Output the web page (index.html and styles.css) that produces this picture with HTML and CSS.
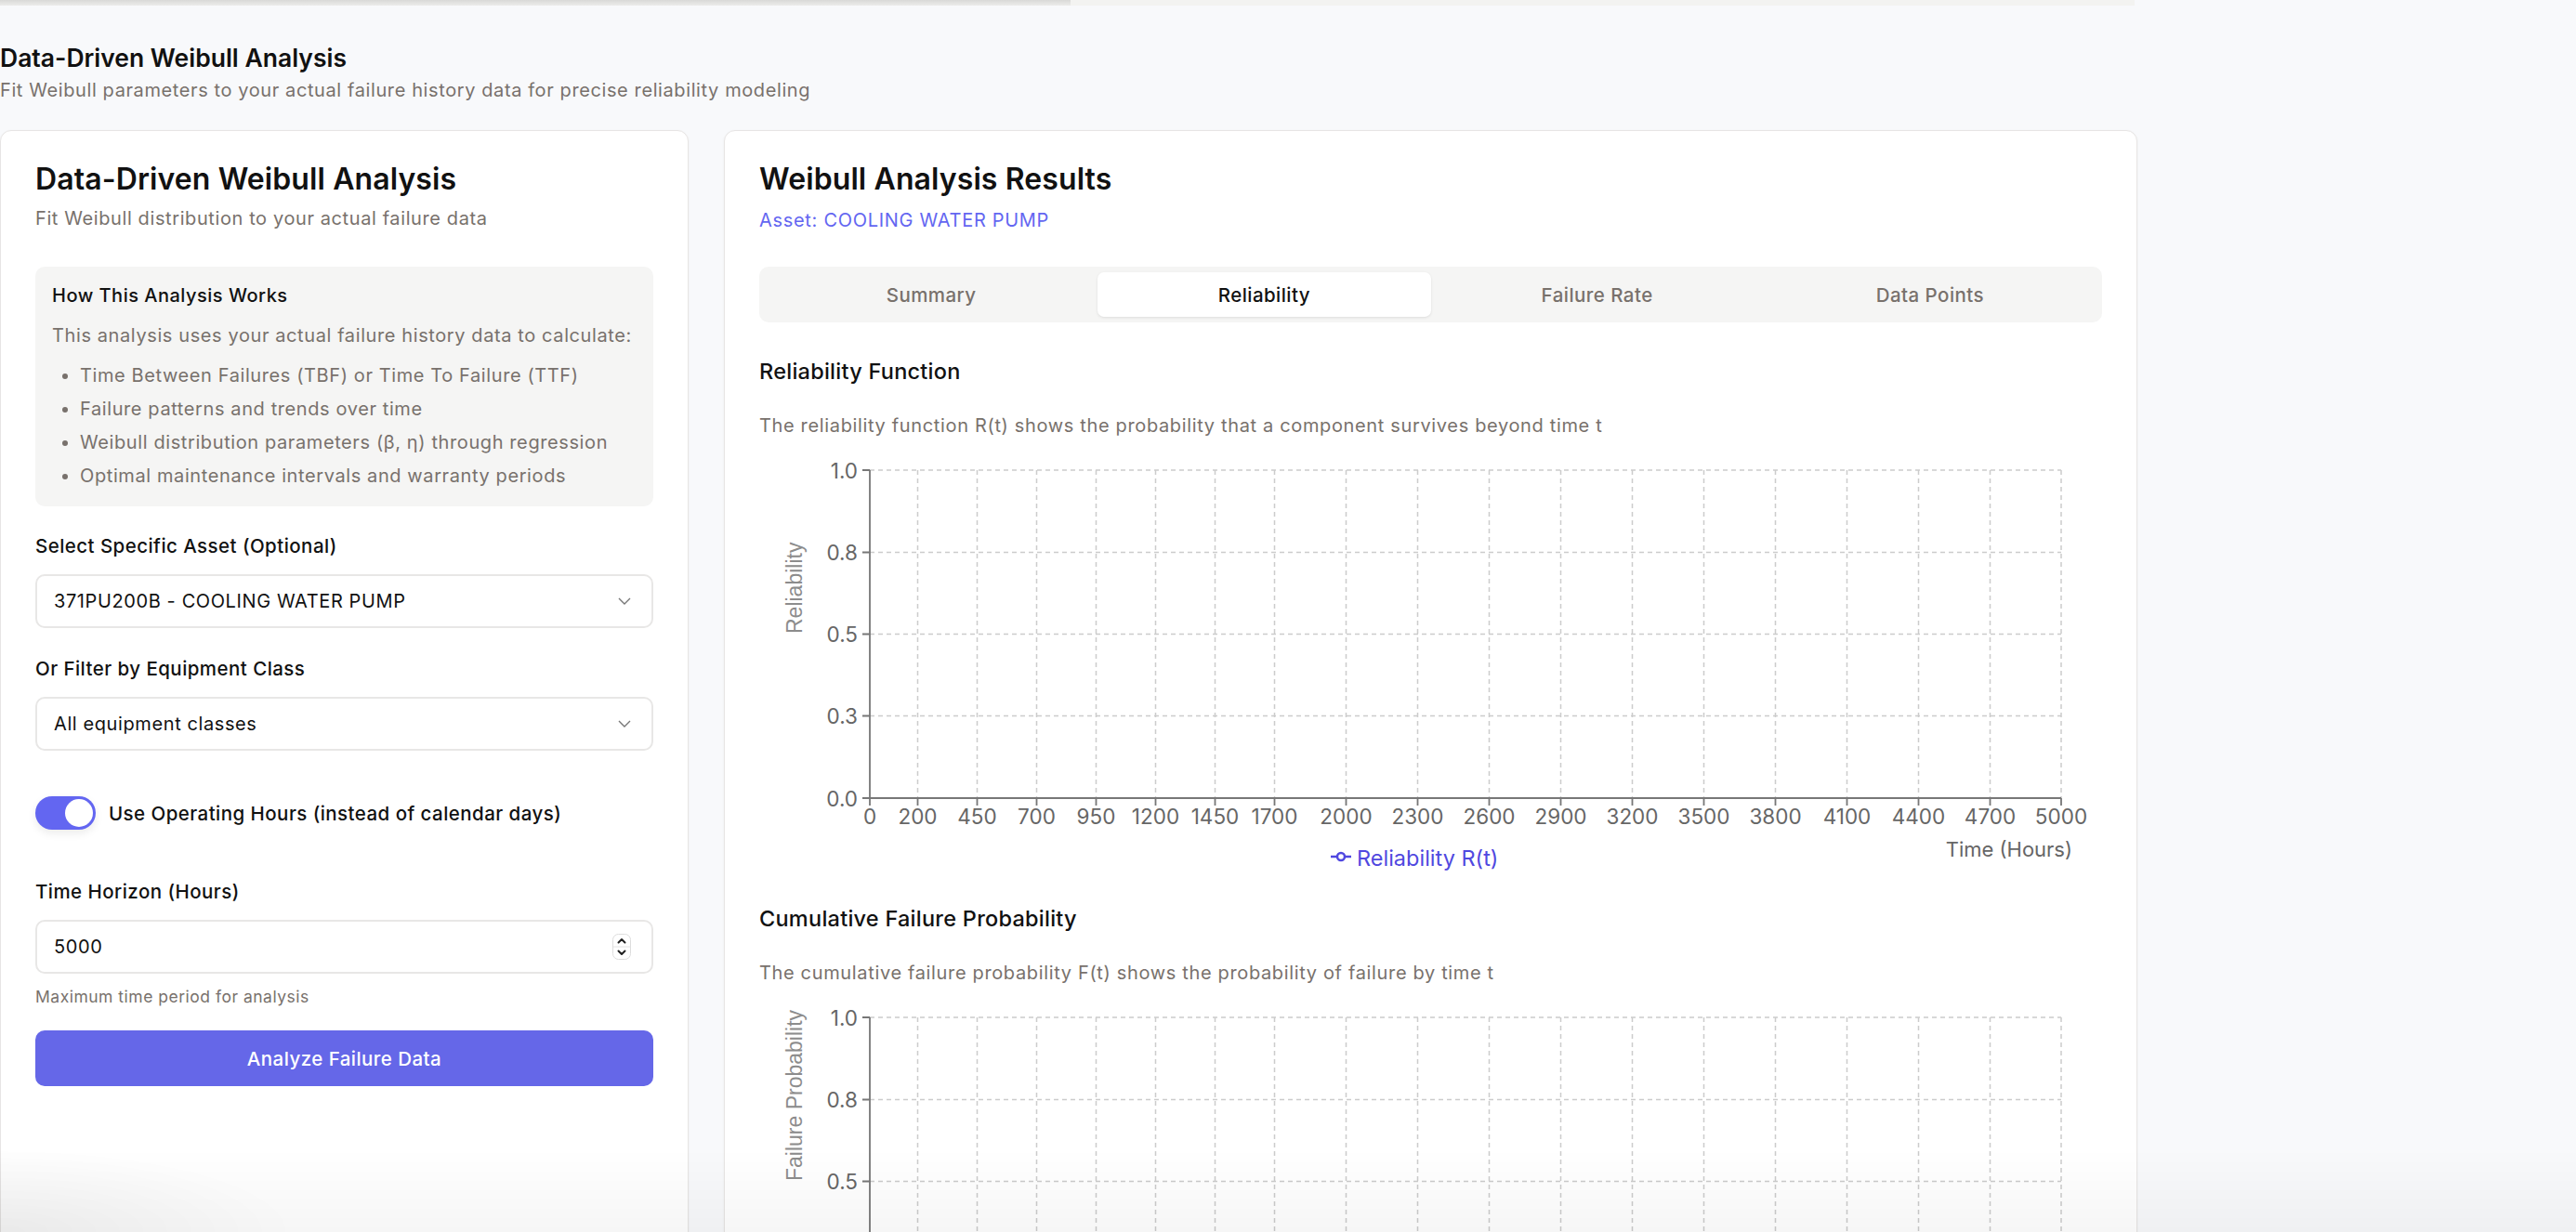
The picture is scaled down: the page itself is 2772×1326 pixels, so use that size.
FILE: index.html
```html
<!DOCTYPE html>
<html lang="en">
<head>
<meta charset="utf-8">
<title>Data-Driven Weibull Analysis</title>
<link rel="stylesheet" href="styles.css">
</head>
<body>
<div class="topstrip"><div class="strip-a"></div><div class="strip-b"></div></div>
<main class="page">
  <header class="page-head">
    <h1 class="page-title">Data-Driven Weibull Analysis</h1>
    <p class="page-sub">Fit Weibull parameters to your actual failure history data for precise reliability modeling</p>
  </header>

  <div class="layout">
    <section class="card">
      <h2 class="card-title">Data-Driven Weibull Analysis</h2>
      <p class="card-desc">Fit Weibull distribution to your actual failure data</p>

      <div class="info">
        <div class="info-title">How This Analysis Works</div>
        <p class="info-text">This analysis uses your actual failure history data to calculate:</p>
        <ul class="info-list">
          <li>Time Between Failures (TBF) or Time To Failure (TTF)</li>
          <li>Failure patterns and trends over time</li>
          <li>Weibull distribution parameters (β, η) through regression</li>
          <li>Optimal maintenance intervals and warranty periods</li>
        </ul>
      </div>

      <div class="field field-first">
        <div class="label">Select Specific Asset (Optional)</div>
        <div class="control">
          <span class="control-text">371PU200B - COOLING WATER PUMP</span>
          <svg class="chev" width="14" height="8" viewBox="0 0 14 8"><polyline points="1,1 7,7 13,1"/></svg>
        </div>
      </div>

      <div class="field field-second">
        <div class="label">Or Filter by Equipment Class</div>
        <div class="control">
          <span class="control-text">All equipment classes</span>
          <svg class="chev" width="14" height="8" viewBox="0 0 14 8"><polyline points="1,1 7,7 13,1"/></svg>
        </div>
      </div>

      <div class="toggle-row">
        <span class="toggle"><span class="knob"></span></span>
        <span class="toggle-label">Use Operating Hours (instead of calendar days)</span>
      </div>

      <div class="field field-third">
        <div class="label">Time Horizon (Hours)</div>
        <div class="control">
          <span class="control-text">5000</span>
          <svg class="spinner" width="20" height="28" viewBox="0 0 20 28">
            <rect class="spin-box" x="0.5" y="0.5" width="19" height="27" rx="6"/>
            <line class="spin-sep" x1="1" y1="14" x2="19" y2="14"/>
            <polyline class="spin-arrow" points="6.5,9.5 10,6 13.5,9.5"/>
            <polyline class="spin-arrow" points="6.5,18.5 10,22 13.5,18.5"/>
          </svg>
        </div>
        <div class="help">Maximum time period for analysis</div>
      </div>

      <div class="btn">Analyze Failure Data</div>
    </section>

    <section class="card">
      <h2 class="card-title">Weibull Analysis Results</h2>
      <p class="asset">Asset: COOLING WATER PUMP</p>

      <div class="tabs">
        <div class="tab">Summary</div>
        <div class="tab active">Reliability</div>
        <div class="tab">Failure Rate</div>
        <div class="tab">Data Points</div>
      </div>

      <div class="chart-block chart-first">
        <h3 class="chart-title">Reliability Function</h3>
        <p class="chart-desc">The reliability function R(t) shows the probability that a component survives beyond time t</p>
        <svg class="chart" width="1445" height="470" viewBox="0 0 1445 470">
          <path class="grid" d="M119 20H1401M119 108.5H1401M119 196.5H1401M119 284.5H1401M170.5 20V373M234.5 20V373M298.5 20V373M362.5 20V373M426.5 20V373M490.5 20V373M554.5 20V373M631.5 20V373M708.5 20V373M785.5 20V373M862.5 20V373M939.5 20V373M1016.5 20V373M1093.5 20V373M1170.5 20V373M1247.5 20V373M1324.5 20V373M1401 20V373"/>
          <path class="axis" d="M119 20V373M119 373H1401M111 20H119M111 108.5H119M111 196.5H119M111 284.5H119M111 373H119M119 373v8M170.5 373v8M234.5 373v8M298.5 373v8M362.5 373v8M426.5 373v8M490.5 373v8M554.5 373v8M631.5 373v8M708.5 373v8M785.5 373v8M862.5 373v8M939.5 373v8M1016.5 373v8M1093.5 373v8M1170.5 373v8M1247.5 373v8M1324.5 373v8M1401 373v8"/>
          <g class="ytick">
            <text x="106" y="20">1.0</text>
            <text x="106" y="108.5">0.8</text>
            <text x="106" y="196.5">0.5</text>
            <text x="106" y="284.5">0.3</text>
            <text x="106" y="373">0.0</text>
          </g>
          <g class="xtick">
            <text x="119" y="392">0</text>
            <text x="170.5" y="392">200</text>
            <text x="234.5" y="392">450</text>
            <text x="298.5" y="392">700</text>
            <text x="362.5" y="392">950</text>
            <text x="426.5" y="392">1200</text>
            <text x="490.5" y="392">1450</text>
            <text x="554.5" y="392">1700</text>
            <text x="631.5" y="392">2000</text>
            <text x="708.5" y="392">2300</text>
            <text x="785.5" y="392">2600</text>
            <text x="862.5" y="392">2900</text>
            <text x="939.5" y="392">3200</text>
            <text x="1016.5" y="392">3500</text>
            <text x="1093.5" y="392">3800</text>
            <text x="1170.5" y="392">4100</text>
            <text x="1247.5" y="392">4400</text>
            <text x="1324.5" y="392">4700</text>
            <text x="1401" y="392">5000</text>
          </g>
          <text class="ylabel" transform="translate(46 196) rotate(-90)">Reliability</text>
          <text class="xlabel" x="1413" y="428">Time (Hours)</text>
          <path class="legend-line" d="M615 436H637"/>
          <circle class="legend-dot" cx="626" cy="436" r="4"/>
          <text class="legend-text" x="643" y="437">Reliability R(t)</text>
        </svg>
      </div>

      <div class="chart-block chart-second">
        <h3 class="chart-title">Cumulative Failure Probability</h3>
        <p class="chart-desc">The cumulative failure probability F(t) shows the probability of failure by time t</p>
        <svg class="chart" width="1445" height="470" viewBox="0 0 1445 470">
          <path class="grid" d="M119 20H1401M119 108.5H1401M119 196.5H1401M119 284.5H1401M170.5 20V373M234.5 20V373M298.5 20V373M362.5 20V373M426.5 20V373M490.5 20V373M554.5 20V373M631.5 20V373M708.5 20V373M785.5 20V373M862.5 20V373M939.5 20V373M1016.5 20V373M1093.5 20V373M1170.5 20V373M1247.5 20V373M1324.5 20V373M1401 20V373"/>
          <path class="axis" d="M119 20V373M119 373H1401M111 20H119M111 108.5H119M111 196.5H119M111 284.5H119M111 373H119M119 373v8M170.5 373v8M234.5 373v8M298.5 373v8M362.5 373v8M426.5 373v8M490.5 373v8M554.5 373v8M631.5 373v8M708.5 373v8M785.5 373v8M862.5 373v8M939.5 373v8M1016.5 373v8M1093.5 373v8M1170.5 373v8M1247.5 373v8M1324.5 373v8M1401 373v8"/>
          <g class="ytick">
            <text x="106" y="20">1.0</text>
            <text x="106" y="108.5">0.8</text>
            <text x="106" y="196.5">0.5</text>
            <text x="106" y="284.5">0.3</text>
            <text x="106" y="373">0.0</text>
          </g>
          <g class="xtick">
            <text x="119" y="392">0</text>
            <text x="170.5" y="392">200</text>
            <text x="234.5" y="392">450</text>
            <text x="298.5" y="392">700</text>
            <text x="362.5" y="392">950</text>
            <text x="426.5" y="392">1200</text>
            <text x="490.5" y="392">1450</text>
            <text x="554.5" y="392">1700</text>
            <text x="631.5" y="392">2000</text>
            <text x="708.5" y="392">2300</text>
            <text x="785.5" y="392">2600</text>
            <text x="862.5" y="392">2900</text>
            <text x="939.5" y="392">3200</text>
            <text x="1016.5" y="392">3500</text>
            <text x="1093.5" y="392">3800</text>
            <text x="1170.5" y="392">4100</text>
            <text x="1247.5" y="392">4400</text>
            <text x="1324.5" y="392">4700</text>
            <text x="1401" y="392">5000</text>
          </g>
          <text class="ylabel" transform="translate(46 196) rotate(-90)">Failure Probability</text>
          <text class="xlabel" x="1413" y="428">Time (Hours)</text>
          <path class="legend-line" d="M586 436H608"/>
          <circle class="legend-dot" cx="597" cy="436" r="4"/>
          <text class="legend-text" x="614" y="437">Failure Probability F(t)</text>
        </svg>
      </div>
    </section>
  </div>
</main>
<div class="bottom-fade"></div>
</body>
</html>
```

FILE: styles.css
```css
* { box-sizing: border-box; }

html, body {
  margin: 0;
  padding: 0;
}

body {
  background: #f8f9fb;
  color: #111111;
  font-family: "Inter", "Noto Sans", sans-serif;
  overflow: hidden;
}

.topstrip {
  display: flex;
  height: 6px;
}
.strip-a {
  width: 1152px;
  background: linear-gradient(#d9d9d7, #ececea);
}
.strip-b {
  width: 1145px;
  background: #f3f3f1;
}

.page-head {
  margin-top: 40px;
}
.page-title {
  margin: 0;
  font-size: 26.5px;
  line-height: 32px;
  font-weight: 600;
  letter-spacing: 0;
}
.page-sub {
  margin: 6px 0 0;
  font-size: 20px;
  line-height: 26px;
  letter-spacing: 0.6px;
  color: #78716c;
}

.layout {
  display: grid;
  grid-template-columns: 741px 1521px;
  column-gap: 38px;
  margin-top: 30px;
}

.card {
  background: #ffffff;
  border: 1px solid #e7e5e4;
  border-radius: 12px;
  padding: 32px 37px 60px;
  box-shadow: 0 1px 3px rgba(0, 0, 0, 0.05);
}

.card-title {
  margin: 0;
  font-size: 32px;
  line-height: 40px;
  font-weight: 600;
  letter-spacing: 0.1px;
}
.card-desc {
  margin: 9px 0 0;
  font-size: 20px;
  line-height: 26px;
  letter-spacing: 0.6px;
  color: #78716c;
}

.info {
  margin-top: 39px;
  background: #f5f5f4;
  border-radius: 10px;
  padding: 18px 18px 20px;
}
.info-title {
  font-size: 20px;
  line-height: 26px;
  letter-spacing: 0.5px;
  font-weight: 500;
}
.info-text {
  margin: 17px 0 0;
  font-size: 20px;
  line-height: 26px;
  letter-spacing: 0.6px;
  color: #78716c;
}
.info-list {
  margin: 17px 0 0;
  padding-left: 30px;
  color: #78716c;
  font-size: 20px;
  line-height: 26px;
  letter-spacing: 0.6px;
}
.info-list li + li {
  margin-top: 10px;
}

.label {
  font-size: 20.5px;
  line-height: 26px;
  letter-spacing: 0.45px;
  font-weight: 500;
}
.field-first { margin-top: 30px; }
.field-second { margin-top: 31px; }
.field-third { margin-top: 54px; }

.control {
  margin-top: 17px;
  height: 58px;
  border: 2px solid #e8e7e6;
  border-radius: 10px;
  padding: 0 22px 0 18px;
  display: flex;
  align-items: center;
  justify-content: space-between;
}
.control-text {
  font-size: 20px;
  letter-spacing: 0.6px;
}
.chev polyline {
  fill: none;
  stroke: #777777;
  stroke-width: 1.4;
}
.spinner .spin-box {
  fill: #ffffff;
  stroke: #dddddd;
  stroke-width: 1;
}
.spinner .spin-sep {
  stroke: #e2e2e2;
  stroke-width: 1;
}
.spinner .spin-arrow {
  fill: none;
  stroke: #222222;
  stroke-width: 2;
  stroke-linecap: round;
  stroke-linejoin: round;
}

.toggle-row {
  margin-top: 49px;
  display: flex;
  align-items: center;
  gap: 14px;
  height: 36px;
}
.toggle {
  width: 65px;
  height: 36px;
  border-radius: 18px;
  background: #6366f1;
  display: flex;
  align-items: center;
  justify-content: flex-end;
  padding: 3px;
  box-shadow: 0 4px 10px rgba(0, 0, 0, 0.08);
}
.knob {
  width: 30px;
  height: 30px;
  border-radius: 50%;
  background: #ffffff;
}
.toggle-label {
  font-size: 20.5px;
  letter-spacing: 0.45px;
  font-weight: 500;
}

.help {
  margin-top: 14px;
  font-size: 17.5px;
  line-height: 22px;
  letter-spacing: 0.5px;
  color: #78716c;
}

.btn {
  margin-top: 25px;
  height: 60px;
  border-radius: 10px;
  background: #6567e8;
  color: #ffffff;
  display: flex;
  align-items: center;
  justify-content: center;
  font-size: 20.5px;
  letter-spacing: 0.45px;
  font-weight: 500;
}

.asset {
  margin: 11px 0 0;
  font-size: 20px;
  line-height: 26px;
  letter-spacing: 0.7px;
  color: #6366f1;
}

.tabs {
  margin-top: 37px;
  height: 60px;
  padding: 6px;
  background: #f5f5f4;
  border-radius: 10px;
  display: grid;
  grid-template-columns: repeat(4, 1fr);
}
.tab {
  display: flex;
  align-items: center;
  justify-content: center;
  border-radius: 7px;
  font-size: 20.5px;
  letter-spacing: 0.45px;
  font-weight: 500;
  color: #78716c;
}
.tab.active {
  background: #ffffff;
  color: #111111;
  box-shadow: 0 1px 3px rgba(0, 0, 0, 0.1);
}

.chart-first { margin-top: 38px; }
.chart-second { margin-top: 18px; }

.chart-title {
  margin: 0;
  font-size: 23.5px;
  line-height: 30px;
  letter-spacing: 0.25px;
  font-weight: 500;
}
.chart-desc {
  margin: 30px 0 0;
  font-size: 20px;
  line-height: 26px;
  letter-spacing: 0.65px;
  color: #78716c;
}
.chart {
  display: block;
  margin-top: 15px;
  overflow: visible;
}
.chart .grid {
  fill: none;
  stroke: #cccccc;
  stroke-width: 1.5;
  stroke-dasharray: 5 4;
}
.chart .axis {
  fill: none;
  stroke: #777777;
  stroke-width: 1.8;
}
.chart .ytick text {
  font-family: "Inter", "Noto Sans", sans-serif;
  font-size: 22.5px;
  fill: #666666;
  text-anchor: end;
  dominant-baseline: central;
}
.chart .xtick text {
  font-family: "Inter", "Noto Sans", sans-serif;
  font-size: 22.5px;
  fill: #666666;
  text-anchor: middle;
  dominant-baseline: central;
}
.chart .ylabel {
  font-family: "Liberation Sans", Arial, sans-serif;
  font-size: 23px;
  fill: #8c8c8c;
  text-anchor: start;
}
.chart .xlabel {
  font-family: "Inter", "Noto Sans", sans-serif;
  font-size: 22px;
  fill: #666666;
  text-anchor: end;
  dominant-baseline: central;
}
.chart .legend-line {
  stroke: #5048e0;
  stroke-width: 2.5;
  fill: none;
}
.chart .legend-dot {
  fill: #ffffff;
  stroke: #5048e0;
  stroke-width: 2.5;
}
.chart .legend-text {
  font-family: "Inter", "Noto Sans", sans-serif;
  font-size: 23.5px;
  fill: #5048e0;
  dominant-baseline: central;
}

.bottom-fade {
  position: fixed;
  left: 0;
  right: 0;
  bottom: 0;
  height: 90px;
  pointer-events: none;
  background:
    radial-gradient(ellipse 320px 90px at 0 100%, rgba(0, 0, 0, 0.05), rgba(0, 0, 0, 0)),
    linear-gradient(to bottom, rgba(0, 0, 0, 0), rgba(0, 0, 0, 0.035));
}
```
